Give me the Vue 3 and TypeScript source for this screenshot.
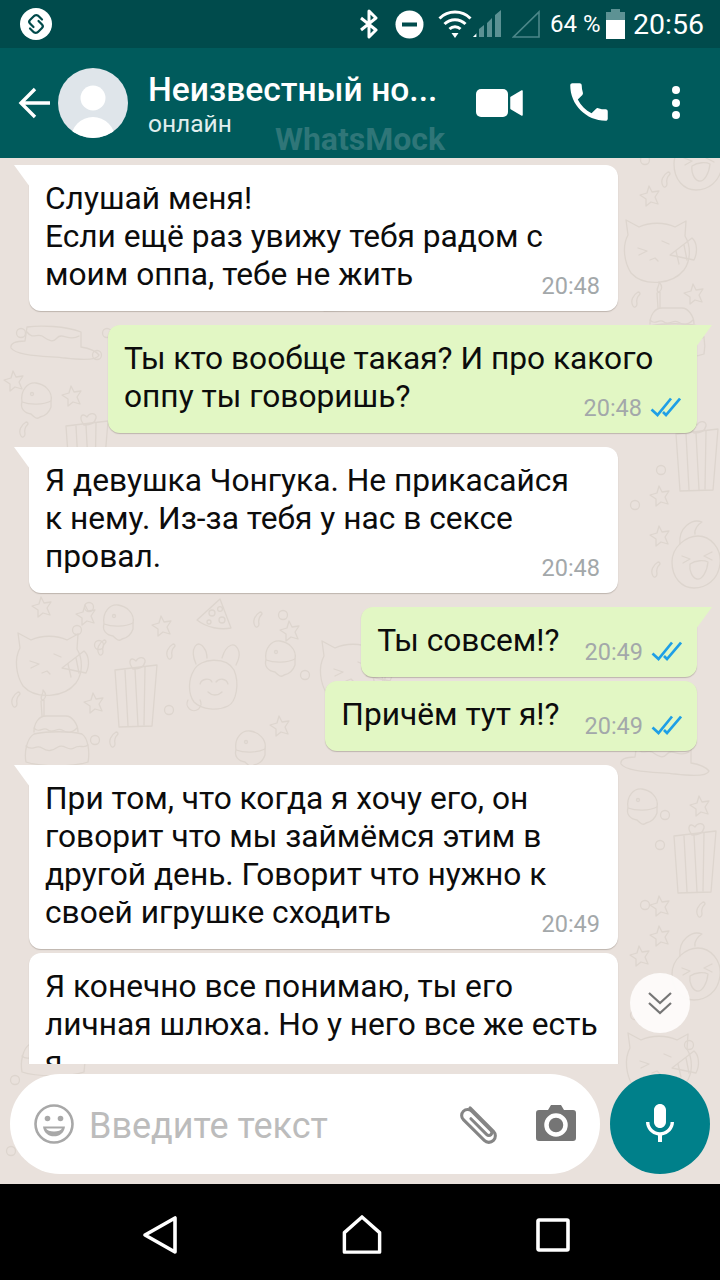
<script setup lang="ts">
interface Message {
  id: number
  side: 'in' | 'out'
  text: string
  time: string
  tail?: boolean
  near?: boolean
  inline?: boolean
}

interface Motif {
  s: string
  x: number
  y: number
  k?: number
}

const messages: Message[] = [
  { id: 1, side: 'in', text: 'Слушай меня!\nЕсли ещё раз увижу тебя радом с\nмоим оппа, тебе не жить', time: '20:48', tail: true },
  { id: 2, side: 'out', text: 'Ты кто вообще такая? И про какого\nоппу ты говоришь?', time: '20:48', tail: true },
  { id: 3, side: 'in', text: 'Я девушка Чонгука. Не прикасайся\nк нему. Из-за тебя у нас в сексе\nпровал.', time: '20:48', tail: true },
  { id: 4, side: 'out', text: 'Ты совсем!?', time: '20:49', tail: true, inline: true },
  { id: 5, side: 'out', text: 'Причём тут я!?', time: '20:49', near: true, inline: true },
  { id: 6, side: 'in', text: 'При том, что когда я хочу его, он\nговорит что мы займёмся этим в\nдругой день. Говорит что нужно к\nсвоей игрушке сходить', time: '20:49', tail: true },
  { id: 7, side: 'in', text: 'Я конечно все понимаю, ты его\nличная шлюха. Но у него все же есть\nя', time: '', near: true }
]

const motifs: Motif[] = [
  { s: 'cat', x: 14, y: 628 }, { s: 'cat', x: 622, y: 215 }, { s: 'cat', x: 318, y: 636 }, { s: 'cat', x: 624, y: 1028 },
  { s: 'gift', x: 113, y: 656 }, { s: 'gift', x: 674, y: 420 }, { s: 'gift', x: 672, y: 822 }, { s: 'gift', x: 64, y: 412 }, { s: 'gift', x: 318, y: 240 },
  { s: 'cake', x: 24, y: 690 }, { s: 'cake', x: 20, y: 1000 }, { s: 'cake', x: 640, y: 282 },
  { s: 'plate', x: 10, y: 326 }, { s: 'plate', x: 620, y: 742 },
  { s: 'bunny', x: 186, y: 640 },
  { s: 'chick', x: 670, y: 518 }, { s: 'chick', x: 670, y: 930 }, { s: 'chick', x: 672, y: 120 },
  { s: 'burger', x: 100, y: 604 }, { s: 'burger', x: 18, y: 382 }, { s: 'burger', x: 624, y: 788 }, { s: 'burger', x: 262, y: 640 }, { s: 'burger', x: 232, y: 730 },
  { s: 'pizza', x: 196, y: 598 },
  { s: 'star', x: 84, y: 692 }, { s: 'star', x: 32, y: 596 }, { s: 'star', x: 76, y: 604 }, { s: 'star', x: 152, y: 615 }, { s: 'star', x: 62, y: 385 }, { s: 'star', x: 4, y: 370 },
  { s: 'star', x: 640, y: 185 }, { s: 'star', x: 684, y: 283 }, { s: 'star', x: 650, y: 485 }, { s: 'star', x: 650, y: 525 }, { s: 'star', x: 690, y: 795 },
  { s: 'star', x: 650, y: 895 }, { s: 'star', x: 650, y: 925 }, { s: 'star', x: 270, y: 715 }, { s: 'star', x: 280, y: 620 }, { s: 'star', x: 630, y: 945 },
  { s: 'ring', x: 16, y: 328 }, { s: 'ring', x: 640, y: 155 }, { s: 'ring', x: 92, y: 350 }, { s: 'ring', x: 102, y: 328 }, { s: 'ring', x: 84, y: 602 },
  { s: 'ring', x: 94, y: 640 }, { s: 'ring', x: 72, y: 625 }, { s: 'ring', x: 164, y: 705 }, { s: 'ring', x: 90, y: 735 }, { s: 'ring', x: 630, y: 500 },
  { s: 'ring', x: 656, y: 465 }, { s: 'ring', x: 660, y: 810 }, { s: 'ring', x: 655, y: 840 }, { s: 'ring', x: 640, y: 900 }, { s: 'ring', x: 278, y: 610 },
  { s: 'ring', x: 300, y: 670 }, { s: 'ring', x: 630, y: 1010 }, { s: 'ring', x: 684, y: 1040 }, { s: 'ring', x: 10, y: 1075 }, { s: 'ring', x: 6, y: 1146 },
  { s: 'candy', x: 96, y: 638 }, { s: 'candy', x: 165, y: 642 }, { s: 'candy', x: 108, y: 730 }, { s: 'candy', x: 630, y: 290 }, { s: 'candy', x: 660, y: 170 },
  { s: 'candy', x: 650, y: 560 }, { s: 'candy', x: 695, y: 900 }, { s: 'candy', x: 252, y: 610 }, { s: 'candy', x: 10, y: 690 }, { s: 'candy', x: 18, y: 420 }
]

function motifTransform(m: Motif): string {
  return `translate(${m.x} ${m.y}) scale(${m.k ?? 1})`
}
</script>

<template>
  <div class="phone">
    <div class="status">
      <svg class="shazam" width="32" height="32" viewBox="0 0 32 32">
        <circle cx="16" cy="16" r="16" fill="#fff" />
        <g fill="none" stroke="#00494a" stroke-width="2.200" stroke-linecap="round" stroke-linejoin="round">
          <path d="M22 11.500l-3-3a3.500 3.500 0 0 0-5.500 0L10 12a2.500 2.500 0 0 0 0 3.500l3.500 3.500" />
          <path d="M22 11.500l-3-3a3.500 3.500 0 0 0-5.500 0L10 12a2.500 2.500 0 0 0 0 3.500l3.500 3.500" transform="rotate(180 16 16)" />
        </g>
      </svg>
      <div class="status-right">
        <svg width="20" height="30" viewBox="0 0 20 30">
          <path d="M2 9l15 12-7 7V2l7 7L2 21" fill="none" stroke="#fff" stroke-width="3" stroke-linejoin="round" />
        </svg>
        <svg class="dnd" width="29" height="29" viewBox="0 0 29 29">
          <circle cx="14.500" cy="14.500" r="14" fill="#fff" />
          <rect x="7" y="12.500" width="15" height="4" fill="#004b4c" />
        </svg>
        <svg class="wifi" width="34" height="30" viewBox="0 0 34 30">
          <g fill="none" stroke="#fff" stroke-width="3">
            <path d="M1.500 9.500a22 22 0 0 1 31 0" />
            <path d="M6.500 15a15 15 0 0 1 21 0" />
            <path d="M11.500 20a8 8 0 0 1 11 0" />
          </g>
          <path d="M13.500 24h7L17 29z" fill="#fff" />
        </svg>
        <svg class="signal" width="30" height="28" viewBox="0 0 30 28">
          <path d="M0 27l4-4v4zM6 27v-8l5-4v12zM14 27V13l5-5v19zM22 27V5l6-5v27z" fill="#5b9193" />
          <path d="M0 27l3-3v3z" fill="#fff" />
        </svg>
        <svg class="triangle" width="28" height="28" viewBox="0 0 28 28">
          <path d="M1.500 27H27V2z" fill="none" stroke="#4b8789" stroke-width="1.600" />
        </svg>
        <span class="percent">64 %</span>
        <svg class="battery" width="19" height="30" viewBox="0 0 19 30">
          <path d="M5 0h9v3h5v8H0V3h5z" fill="#5d9294" />
          <rect y="11" width="19" height="19" fill="#fff" />
        </svg>
        <span class="clock">20:56</span>
      </div>
    </div>

    <header class="topbar">
      <svg class="back" width="34" height="34" viewBox="0 0 34 34">
        <path d="M32 17H4M17 3L3 17l14 14" fill="none" stroke="#fff" stroke-width="3.400" />
      </svg>
      <svg class="avatar" width="70" height="70" viewBox="0 0 70 70">
        <defs>
          <clipPath id="avatarClip"><circle cx="35" cy="35" r="35" /></clipPath>
        </defs>
        <circle cx="35" cy="35" r="35" fill="#dfe5ea" />
        <circle cx="35" cy="30" r="12.500" fill="#fff" />
        <ellipse cx="35" cy="71" rx="22" ry="22" fill="#fff" clip-path="url(#avatarClip)" />
      </svg>
      <div class="who">
        <div class="name">Неизвестный но...</div>
        <div class="presence">онлайн</div>
      </div>
      <svg class="video" width="48" height="30" viewBox="0 0 48 30">
        <rect x="0" y="1" width="32" height="28" rx="5" fill="#fff" />
        <path d="M35 9.500L46 3v24l-11-6.500z" fill="#fff" stroke="#fff" stroke-linejoin="round" stroke-width="1.500" />
      </svg>
      <svg class="call" width="50" height="50" viewBox="0 0 24 24">
        <path d="M6.620 10.790c1.440 2.830 3.760 5.140 6.590 6.590l2.200-2.200c.27-.27.67-.36 1.020-.24 1.120.37 2.330.57 3.570.57.55 0 1 .45 1 1V20c0 .55-.45 1-1 1-9.390 0-17-7.610-17-17 0-.55.45-1 1-1h3.500c.55 0 1 .45 1 1 0 1.250.2 2.450.57 3.570.11.35.03.74-.25 1.020l-2.200 2.200z" fill="#fff" />
      </svg>
      <svg class="more" width="10" height="36" viewBox="0 0 10 36">
        <circle cx="5" cy="5" r="4" fill="#fff" />
        <circle cx="5" cy="18" r="4" fill="#fff" />
        <circle cx="5" cy="30" r="4" fill="#fff" />
      </svg>
      <div class="mark">WhatsMock</div>
    </header>

    <main class="chat">
      <svg class="wallpaper" width="720" height="1026" viewBox="0 158 720 1026">
        <defs>
          <g id="cat">
            <path d="M6 20L4 5l13 7c10-5 26-5 36 0l11-6-1 15c6 10 6 24-1 34-12 15-40 17-53 3C2 47 0 31 6 20z" />
            <path d="M16 33l9 3-8 4M40 26l7 3M28 45l5-2 3 3" />
            <path d="M48 40l22-17c5 4 6 14 2 22z" />
            <path d="M54 36l3 13M62 30l3 15" />
          </g>
          <g id="gift">
            <path d="M2 14l42-5-5 61-33 1z" />
            <path d="M12 14l3 56M22 13l3 57M32 11l-1 58" />
            <path d="M20 13c-6-8-2-13 3-8 3-5 10-4 9 1s-6 7-12 7z" />
          </g>
          <g id="cake">
            <path d="M18 26l-1-15 3-1v16M18 10c-3-3 2-6 1-10 4 4 3 8 0 10z" />
            <path d="M10 42c0-8 4-16 12-16h20c6 0 12 8 12 16" />
            <path d="M10 38c5 6 9-2 14 2s9-3 14 0 9 4 15-2" />
            <path d="M2 72c-2-10 1-24 8-28 14-3 36-3 48 0 6 4 8 18 6 28-14 5-48 5-62 0z" />
            <path d="M2 56c6 6 10-2 16 2s10 3 16-1 10 5 16 1 10 1 14-3" />
          </g>
          <g id="plate">
            <path d="M1 22c-1-5 5-7 14-7l2-14c14-2 38-1 54 5v15c6 1 14 3 18 8-2 6-18 5-34 3C35 30 6 30 1 22z" />
            <path d="M17 6c6 8 10 1 15 4s10 8 15 2 12 4 22-2" />
          </g>
          <g id="bunny">
            <path d="M10 24C3 8 12-2 18 8c3 4 3 8 3 10M36 18c4-14 14-18 17-6 1 5-1 9-3 13" />
            <path d="M8 30c6-12 32-14 40 0 6 14 2 32-6 36-10 5-26 4-34-4-6-8-6-22 0-32z" />
            <path d="M14 44c2-6 10-6 12-2M30 42c3-4 10-4 12 2M22 52c4 4 10 4 14 0M2 60a7 7 0 1 0 12 0" />
          </g>
          <g id="chick">
            <path d="M10 26C8 10 22 0 32 4c-4 2-8 8-7 12" />
            <path d="M2 44c0-15 14-26 26-26s24 12 22 28-14 24-26 24S2 60 2 44z" />
            <path d="M12 38l8 3-7 4M42 34l-8 4 8 4M20 46c6-4 14-4 18-2-1 10-6 18-11 17-5-1-8-9-7-15z" />
          </g>
          <g id="burger">
            <path d="M4 20C2 8 10 0 18 1s17 8 15 18c-8 4-21 4-29 1z" />
            <path d="M4 20c-2 6 2 11 9 12 3 3 6 6 9 3 5-1 9-4 11-10v-6" />
            <circle cx="14" cy="12" r="1.500" />
          </g>
          <g id="pizza">
            <path d="M24 1L1 22c10 8 24 10 34 8z" />
            <circle cx="16" cy="15" r="3" /><circle cx="24" cy="11" r="2.400" /><circle cx="26" cy="22" r="3" /><circle cx="13" cy="24" r="2" />
          </g>
          <path id="star" d="M9 1l3 6 7-1-4 6 3 7-7-2-5 4v-7l-6-4 7-2z" />
          <circle id="ring" cx="5" cy="5" r="4.500" />
          <path id="candy" d="M3 16c-3-5 0-11 5-14 1 0 2 1 2 2-3 3-4 6-3 10 0 3-3 4-4 2z" />
        </defs>
        <g fill="none" stroke="#ddd5ce" stroke-width="1.300" stroke-linecap="round" stroke-linejoin="round">
          <use
            v-for="(m, i) in motifs"
            :key="i"
            :href="`#${m.s}`"
            :transform="motifTransform(m)"
          />
        </g>
      </svg>

      <section class="feed">
        <article
          v-for="m in messages"
          :key="m.id"
          class="bubble"
          :class="[m.side, { tail: m.tail, near: m.near, inline: m.inline }]"
        >
          <p class="text">{{ m.text }}</p>
          <div v-if="m.time" class="meta">
            <span class="time">{{ m.time }}</span>
            <svg v-if="m.side === 'out'" class="ticks" width="31" height="20" viewBox="0 0 31 20">
              <path d="M1.500 12.500L7.500 18 21 1.500M13 15l3 3L30 1.500" fill="none" stroke="#1e9fe6" stroke-width="2.700" />
            </svg>
          </div>
        </article>
      </section>

      <div class="jump">
        <svg width="28" height="26" viewBox="0 0 28 26">
          <path d="M3 3l11 10L25 3M3 13l11 10 11-10" fill="none" stroke="#767676" stroke-width="2.200" />
        </svg>
      </div>

      <footer class="composer">
        <div class="field">
          <svg class="emoji" width="42" height="42" viewBox="0 0 42 42">
            <circle cx="21" cy="21" r="18.500" fill="none" stroke="#a8a8a8" stroke-width="2.600" />
            <circle cx="14.500" cy="15.500" r="2.800" fill="#a8a8a8" />
            <circle cx="27.500" cy="15.500" r="2.800" fill="#a8a8a8" />
            <path d="M10 23.500h22c-.8 6.500-5.500 9.800-11 9.800s-10.200-3.300-11-9.800z" fill="#a8a8a8" />
            <path d="M13 25.500h16c-1 2-4 3-8 3s-7-1-8-3z" fill="#fff" />
          </svg>
          <span class="placeholder">Введите текст</span>
          <svg class="clip" width="52" height="52" viewBox="0 -2 44 44">
            <g transform="rotate(45 22 20)">
              <path d="M7 20h28a5.500 5.500 0 0 1 0 11H10a5 5 0 0 1 0-10h23a2.500 2.500 0 0 1 0 5H14" transform="translate(0 -5.500)" fill="none" stroke="#858585" stroke-width="2.600" stroke-linecap="round" />
            </g>
          </svg>
          <svg class="camera" width="40" height="36" viewBox="0 0 40 36">
            <path d="M3 5h9l3-5h10l3 5h9a3 3 0 0 1 3 3v25a3 3 0 0 1-3 3H3a3 3 0 0 1-3-3V8a3 3 0 0 1 3-3z" fill="#757575" />
            <circle cx="20" cy="20" r="9.500" fill="none" stroke="#fff" stroke-width="4.500" />
          </svg>
        </div>
        <button class="mic" type="button" aria-label="mic">
          <svg width="48" height="48" viewBox="0 0 24 24">
            <path d="M12 14c1.660 0 2.990-1.340 2.990-3L15 5c0-1.660-1.340-3-3-3S9 3.340 9 5v6c0 1.660 1.340 3 3 3zm5.300-3c0 3-2.540 5.100-5.300 5.100S6.700 14 6.700 11H5c0 3.410 2.720 6.230 6 6.720V21h2v-3.280c3.280-.48 6-3.300 6-6.720h-1.700z" fill="#fff" />
          </svg>
        </button>
      </footer>
    </main>

    <nav class="nav">
      <svg width="36" height="40" viewBox="0 0 36 40">
        <path d="M33 3v34L3 20z" fill="none" stroke="#fff" stroke-width="3.600" stroke-linejoin="round" />
      </svg>
      <svg class="home" width="40" height="40" viewBox="0 0 42 42">
        <path d="M2.500 39V18.500L21 2l18.500 16.500V39z" fill="none" stroke="#fff" stroke-width="3.600" stroke-linejoin="round" />
      </svg>
      <svg width="34" height="34" viewBox="0 0 34 34">
        <rect x="2" y="2" width="30" height="30" rx="1" fill="none" stroke="#fff" stroke-width="3.600" />
      </svg>
    </nav>
  </div>
</template>

<style scoped>
.phone {
  width: 720px;
  height: 1280px;
  display: flex;
  flex-direction: column;
  overflow: hidden;
  font-family: Roboto, "Noto Sans", sans-serif;
  background: #e9e1dc;
}

.status {
  height: 48px;
  flex: none;
  display: flex;
  align-items: center;
  justify-content: space-between;
  padding: 0 16px 0 20px;
  background: #004b4c;
  color: #fff;
}

.status-right {
  display: flex;
  align-items: center;
}

.dnd { margin-left: 16px; }
.wifi { margin-left: 14px; }
.signal { margin-left: 1px; }
.triangle { margin-left: 9px; }
.percent { margin-left: 10px; font-size: 24px; }
.battery { margin-left: 5px; }
.clock { margin-left: 8.500px; font-size: 28.500px; }

.topbar {
  position: relative;
  height: 110px;
  flex: none;
  display: flex;
  align-items: center;
  background: #005b5c;
  color: #fff;
}

.back { margin-left: 18px; }
.avatar { margin-left: 6px; }

.who {
  margin-left: 20px;
  width: 301px;
  margin-top: 1px;
}

.name {
  font-size: 33.600px;
  font-weight: 500;
  line-height: 40px;
  white-space: nowrap;
}

.presence {
  font-size: 24.500px;
  line-height: 28px;
  color: #e0eeee;
}

.video { margin-left: 27px; }
.call { margin-left: 40px; margin-top: -2px; }
.more { margin-left: 57px; margin-top: -1px; }

.mark {
  position: absolute;
  left: 0;
  right: 0;
  top: 73px;
  text-align: center;
  font-size: 32px;
  font-weight: 700;
  line-height: 36px;
  color: #2f7678;
}

.chat {
  position: relative;
  flex: 1;
  min-height: 0;
  display: flex;
  flex-direction: column;
  background: #e9e1dc;
}

.wallpaper {
  position: absolute;
  left: 0;
  top: 0;
}

.feed {
  position: relative;
  height: 906px;
  flex: none;
  overflow: hidden;
  display: flex;
  flex-direction: column;
  padding-top: 7px;
  box-sizing: border-box;
}

.bubble {
  position: relative;
  flex: none;
  display: grid;
  box-sizing: border-box;
  padding: 15px 16px 17px;
  margin-top: 14px;
  border-radius: 12px;
  box-shadow: 0 1px 1px rgba(90, 80, 70, 0.3);
}

.bubble:first-child { margin-top: 0; }
.bubble.near { margin-top: 4px; }

.bubble.in {
  align-self: flex-start;
  width: 589px;
  margin-left: 29px;
  background: #fff;
}

.bubble.out {
  align-self: flex-end;
  width: 589px;
  margin-right: 23px;
  background: #e2f7c4;
}

.bubble.tail.in { border-top-left-radius: 0; }
.bubble.tail.out { border-top-right-radius: 0; }

.bubble.tail::before {
  content: "";
  position: absolute;
  top: 0;
  width: 16px;
  height: 22px;
}

.bubble.tail.in::before {
  left: -15px;
  background: #fff;
  clip-path: polygon(0 0, 100% 0, 100% 100%);
}

.bubble.tail.out::before {
  right: -15px;
  background: #e2f7c4;
  clip-path: polygon(0 0, 100% 0, 0 100%);
}

.bubble.inline {
  width: auto;
  display: flex;
  gap: 25px;
}

.text {
  grid-area: 1 / 1;
  justify-self: start;
  margin: 0;
  font-size: 31.700px;
  line-height: 38px;
  color: #0c0c0c;
  white-space: pre;
}

.meta {
  grid-area: 1 / 1;
  align-self: end;
  justify-self: end;
  display: flex;
  align-items: center;
  gap: 8px;
  height: 28px;
  margin-right: 2px;
  margin-bottom: -6px;
}

.bubble.out .meta { margin-right: 0; }
.bubble.inline .meta { align-self: flex-end; margin-right: -1px; }

.time {
  font-size: 23.500px;
  line-height: 28px;
  color: #a3a8aa;
}

.ticks { flex: none; margin-top: -3px; }

.jump {
  position: absolute;
  left: 630px;
  top: 815px;
  width: 60px;
  height: 60px;
  border-radius: 50%;
  display: flex;
  align-items: center;
  justify-content: center;
  background: rgba(253, 251, 250, 0.96);
}

.composer {
  position: relative;
  flex: none;
  display: flex;
  gap: 10px;
  padding: 10px;
}

.field {
  width: 590px;
  height: 100px;
  box-sizing: border-box;
  display: flex;
  align-items: center;
  padding: 0 24px 0 23px;
  border-radius: 50px;
  background: #fff;
}

.placeholder {
  margin-left: 14px;
  margin-top: 3px;
  font-size: 36px;
  color: #bcbcbc;
  white-space: nowrap;
}

.clip { margin-left: auto; margin-top: 2px; }
.camera { margin-left: 32px; margin-top: -2px; }

.mic {
  width: 100px;
  height: 100px;
  padding: 0;
  border: 0;
  border-radius: 50%;
  display: flex;
  align-items: center;
  justify-content: center;
  background: #00808a;
}

.nav {
  height: 96px;
  flex: none;
  box-sizing: border-box;
  padding: 6px 150px 0 142px;
  display: flex;
  align-items: center;
  justify-content: space-between;
  background: #000;
}

.home { margin-left: 9px; }
</style>
